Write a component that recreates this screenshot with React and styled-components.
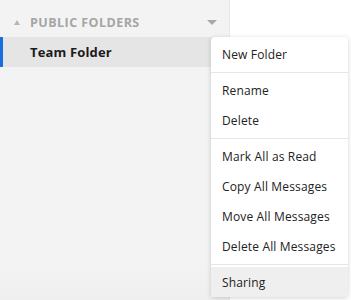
import React from "react";
import styled, { createGlobalStyle } from "styled-components";

const Global = createGlobalStyle`
  html, body {
    margin: 0;
    padding: 0;
    background: #ffffff;
  }
  body {
    font-family: "Open Sans", "Noto Sans", sans-serif;
  }
`;

const menuGroups = [
  ["New Folder"],
  ["Rename", "Delete"],
  ["Mark All as Read", "Copy All Messages", "Move All Messages", "Delete All Messages"],
  ["Sharing"],
];

const App = () => {
  return (
    <Page>
      <Global />
      <Sidebar>
        <SectionHead>
          <Collapse />
          <SectionTitle>Public Folders</SectionTitle>
          <Caret />
        </SectionHead>
        <FolderRow $active>
          <FolderName>Team Folder</FolderName>
        </FolderRow>
      </Sidebar>
      <Content />
      <Menu>
        {menuGroups.map((group, gi) => (
          <React.Fragment key={gi}>
            {gi > 0 && <Separator />}
            {group.map((label) => (
              <MenuItem key={label} $hover={label === "Sharing"}>
                {label}
              </MenuItem>
            ))}
          </React.Fragment>
        ))}
      </Menu>
    </Page>
  );
};

const Page = styled.div`
  position: relative;
  display: flex;
  width: 351px;
  height: 300px;
  overflow: hidden;
`;

const Sidebar = styled.aside`
  width: 229px;
  height: 100%;
  flex-shrink: 0;
  border-right: 1px solid #e9e9e9;
  background: linear-gradient(
    180deg,
    #f3f3f3 0%,
    #f3f3f3 88%,
    #efefef 100%
  );
`;

const Content = styled.main`
  flex: 1;
  background: #ffffff;
`;

const SectionHead = styled.div`
  height: 37px;
  display: flex;
  align-items: center;
  padding: 7px 0 0 14px;
  box-sizing: border-box;
`;

const Collapse = styled.span`
  width: 0;
  height: 0;
  margin-right: 10px;
  border-left: 3px solid transparent;
  border-right: 3px solid transparent;
  border-bottom: 5px solid #b5b5b5;
`;

const SectionTitle = styled.span`
  flex: 1;
  font-size: 12.5px;
  font-weight: 700;
  letter-spacing: 0.45px;
  text-transform: uppercase;
  color: #a5a5a5;
`;

const Caret = styled.span`
  width: 0;
  height: 0;
  margin-right: 12px;
  border-left: 5px solid transparent;
  border-right: 5px solid transparent;
  border-top: 5px solid #a8a8a8;
`;

const FolderRow = styled.div`
  height: 30px;
  display: flex;
  align-items: center;
  padding-left: 30px;
  background: ${(p) => (p.$active ? "#e5e5e5" : "transparent")};
  box-shadow: ${(p) => (p.$active ? "inset 3px 0 0 #1a6fe0" : "none")};
`;

const FolderName = styled.span`
  font-size: 13px;
  font-weight: 700;
  letter-spacing: 0.15px;
  color: #1b1b1b;
`;

const Menu = styled.div`
  position: absolute;
  left: 211px;
  top: 37px;
  width: 137px;
  padding-top: 2px;
  background: #ffffff;
  border-radius: 4px;
  box-shadow: 0 1px 5px rgba(0, 0, 0, 0.18);
`;

const MenuItem = styled.div`
  height: 30px;
  display: flex;
  align-items: center;
  padding-left: 11px;
  font-size: 12px;
  letter-spacing: 0.15px;
  color: #222222;
  white-space: nowrap;
  background: ${(p) => (p.$hover ? "#efefef" : "transparent")};
`;

const Separator = styled.div`
  height: 1px;
  margin: 3px 0 2px;
  background: #e6e6e6;
`;

export default App;
